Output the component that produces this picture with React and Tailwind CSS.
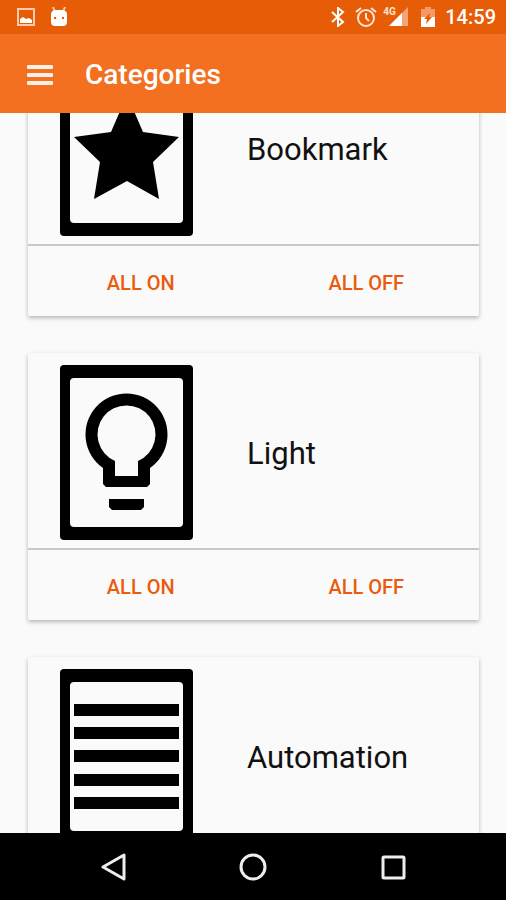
import React from "react";

const categories = [
  { name: "Bookmark", Icon: StarShape },
  { name: "Light", Icon: BulbShape },
  { name: "Automation", Icon: LinesShape },
];

function StarShape() {
  return (
    <path d="M67 34 L83 71 L119 76 L93 101 L99 138 L67 120 L34 138 L40 101 L14 76 L51 71 Z" />
  );
}

function BulbShape() {
  return (
    <>
      <path
        fillRule="evenodd"
        d="M43 103 A41 41 0 1 1 90 103 V119 L87 122 H46 L43 119 Z M55 111 H78 V96 A29 29 0 1 0 55 96 Z"
      />
      <path d="M49 134 H84 V142 L81 145 H52 L49 142 Z" />
    </>
  );
}

function LinesShape() {
  return (
    <>
      {[35, 58, 81, 105, 128].map((y) => (
        <rect key={y} x="14" y={y} width="105" height="12" />
      ))}
    </>
  );
}

function StatusBar() {
  return (
    <div className="flex h-[34px] shrink-0 items-center bg-[#e65c07] pl-4 pr-2.5 text-white">
      <svg className="h-5 w-5" viewBox="0 0 20 20" fill="none">
        <rect x="2" y="2" width="16" height="16" stroke="#ffc9ac" strokeWidth="2" />
        <path d="M4 16 V12 L7 10 L10 12 L13 11 L16 13 V16 Z" fill="#fff" />
      </svg>
      <svg className="ml-[14px] h-5 w-[18px]" viewBox="0 0 18 20">
        <path d="M5 5 L3 0 M13 5 L15 0" stroke="#ffc9ac" strokeWidth="2" />
        <path
          fill="#fff"
          fillRule="evenodd"
          d="M5 3 H13 Q17 4 17 7 V15 Q17 19 13 19 H5 Q1 19 1 15 V7 Q1 4 5 3 Z M4 10 H6 V12 H4 Z M12 10 H14 V12 H12 Z"
        />
      </svg>

      <div className="ml-auto flex items-center">
        <svg className="h-5 w-[14px]" viewBox="0 0 14 20" fill="none" stroke="#fff" strokeWidth="2">
          <path d="M1 5 L12 15 L7 19 V1 L12 5 L1 15" />
        </svg>
        <svg className="ml-2.5 h-[22px] w-[22px]" viewBox="0 0 22 22" fill="none" stroke="#ffe3d3" strokeWidth="2">
          <circle cx="11" cy="12" r="8" />
          <path d="M11 7 V12 L14 15 M1 6 L6 2 M21 6 L16 2" />
        </svg>
        <div className="relative ml-2.5 h-5 w-[22px]">
          <svg className="h-5 w-[22px]" viewBox="0 0 22 20">
            <path d="M2 19 L21 0 V19 Z" fill="#f5a574" />
            <path d="M2 19 L15 6 V19 Z" fill="#fff" />
          </svg>
          <span className="absolute -left-1 top-0 bg-[#e65c07] text-[10px] font-bold leading-[10px] text-[#ffe3d3]">
            4G
          </span>
        </div>
        <svg className="ml-3 h-[22px] w-[14px]" viewBox="0 0 14 22">
          <path d="M4 1 H10 V3 H14 V11 H0 V3 H4 Z" fill="#f39a66" />
          <path d="M0 11 H14 V21 H0 Z" fill="#fff" />
          <path d="M9 7 L3 13 H6 L5 18 L11 11 H8 Z" fill="#e65c07" />
        </svg>
        <span className="ml-[10px] text-[20px] font-medium leading-6">14:59</span>
      </div>
    </div>
  );
}

function Toolbar() {
  return (
    <header className="flex h-[79px] shrink-0 items-center bg-[#f37021] pl-[27px] pt-0.5 text-white">
      <button aria-label="Open menu">
        <svg className="h-5 w-[26px]" viewBox="0 0 26 20" fill="#ffeee4">
          <rect width="26" height="4" rx="1" y="0" />
          <rect width="26" height="4" rx="1" y="8" />
          <rect width="26" height="4" rx="1" y="16" />
        </svg>
      </button>
      <h1 className="ml-8 text-[28px] font-medium leading-8">Categories</h1>
    </header>
  );
}

function CategoryCard({ name, Icon }) {
  return (
    <section className="rounded-[2px] bg-[#fafafa] shadow-[0_2px_4px_rgba(0,0,0,0.28)]">
      <div className="flex items-center border-b-2 border-[#c8c8c8] px-8 pb-2 pt-3">
        <svg className="h-[175px] w-[133px] shrink-0" viewBox="0 0 133 175">
          <rect width="133" height="175" rx="4" />
          <rect x="10" y="13" width="113" height="149" rx="4" fill="#fafafa" />
          <Icon />
        </svg>
        <h2 className="ml-[54px] pt-0.5 text-[31px] leading-9 text-[#111]">{name}</h2>
      </div>
      <div className="grid h-[70px] grid-cols-2 text-[20px] font-medium text-[#ea5b0c]">
        <button className="pt-1">ALL ON</button>
        <button className="pt-1">ALL OFF</button>
      </div>
    </section>
  );
}

function NavigationBar() {
  return (
    <nav className="grid h-[67px] shrink-0 grid-cols-3 bg-black px-[43px]">
      <button aria-label="Back" className="flex items-center justify-center">
        <svg className="h-7 w-7" viewBox="0 0 28 28" fill="none" stroke="#eee" strokeWidth="3" strokeLinejoin="round">
          <path d="M4 14 L25 2 V26 Z" />
        </svg>
      </button>
      <button aria-label="Home" className="flex items-center justify-center">
        <svg className="h-7 w-7" viewBox="0 0 28 28" fill="none" stroke="#eee" strokeWidth="3">
          <circle cx="14" cy="14" r="12" />
        </svg>
      </button>
      <button aria-label="Recent apps" className="flex items-center justify-center">
        <svg className="h-7 w-7" viewBox="0 0 28 28" fill="none" stroke="#eee" strokeWidth="3">
          <rect x="4" y="4" width="21" height="21" rx="1" />
        </svg>
      </button>
    </nav>
  );
}

function App() {
  return (
    <div className="flex h-screen flex-col bg-[#fafafa] font-['Roboto',sans-serif]">
      <StatusBar />
      <Toolbar />
      <main className="min-h-0 flex-1 overflow-hidden">
        {/* list is scrolled partway past the first card */}
        <div className="-mt-16 flex flex-col gap-[37px] pl-7 pr-[27px]">
          {categories.map((item) => (
            <CategoryCard key={item.name} name={item.name} Icon={item.Icon} />
          ))}
        </div>
      </main>
      <NavigationBar />
    </div>
  );
}

export default App;
